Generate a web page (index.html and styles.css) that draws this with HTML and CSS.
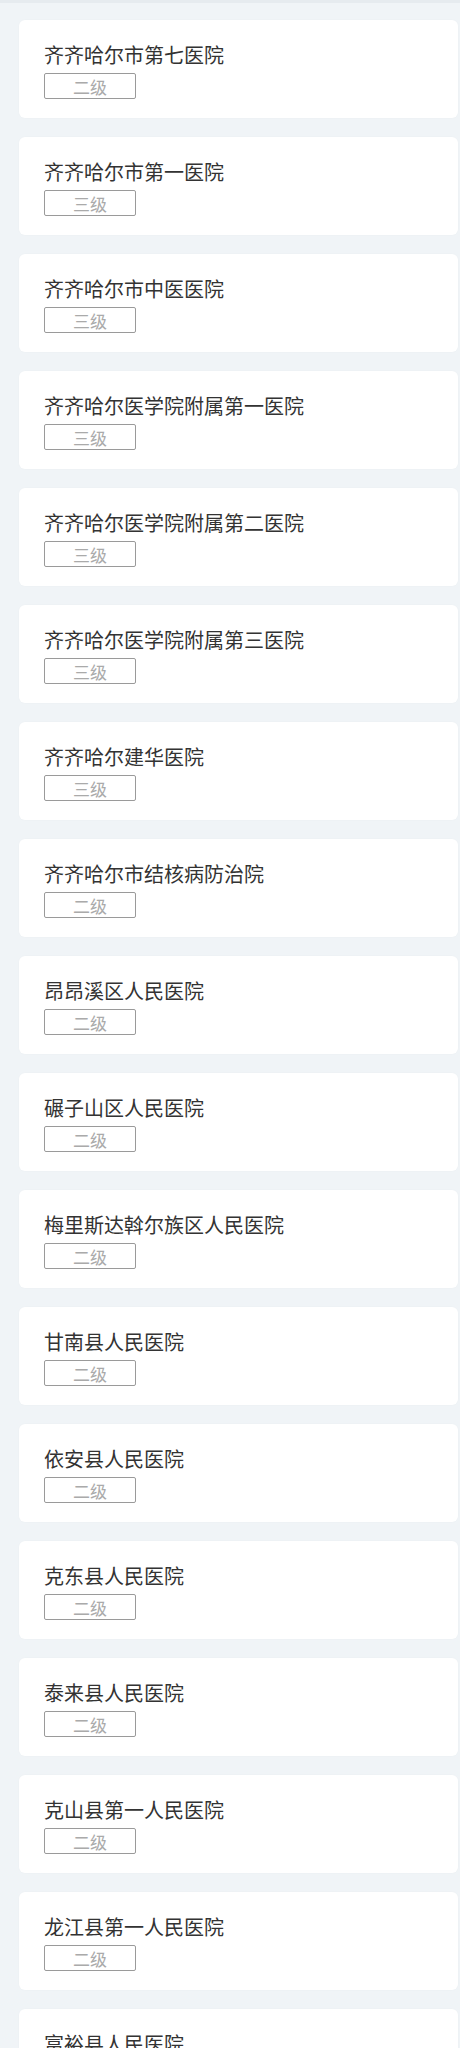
FILE: index.html
```html
<!DOCTYPE html>
<html lang="zh">
<head>
<meta charset="utf-8">
<link rel="stylesheet" href="styles.css">
</head>
<body>
<div class="topbar"></div>
<main class="list">
  <div class="card"><div class="name">齐齐哈尔市第七医院</div><span class="tag">二级</span></div>
  <div class="card"><div class="name">齐齐哈尔市第一医院</div><span class="tag">三级</span></div>
  <div class="card"><div class="name">齐齐哈尔市中医医院</div><span class="tag">三级</span></div>
  <div class="card"><div class="name">齐齐哈尔医学院附属第一医院</div><span class="tag">三级</span></div>
  <div class="card"><div class="name">齐齐哈尔医学院附属第二医院</div><span class="tag">三级</span></div>
  <div class="card"><div class="name">齐齐哈尔医学院附属第三医院</div><span class="tag">三级</span></div>
  <div class="card"><div class="name">齐齐哈尔建华医院</div><span class="tag">三级</span></div>
  <div class="card"><div class="name">齐齐哈尔市结核病防治院</div><span class="tag">二级</span></div>
  <div class="card"><div class="name">昂昂溪区人民医院</div><span class="tag">二级</span></div>
  <div class="card"><div class="name">碾子山区人民医院</div><span class="tag">二级</span></div>
  <div class="card"><div class="name">梅里斯达斡尔族区人民医院</div><span class="tag">二级</span></div>
  <div class="card"><div class="name">甘南县人民医院</div><span class="tag">二级</span></div>
  <div class="card"><div class="name">依安县人民医院</div><span class="tag">二级</span></div>
  <div class="card"><div class="name">克东县人民医院</div><span class="tag">二级</span></div>
  <div class="card"><div class="name">泰来县人民医院</div><span class="tag">二级</span></div>
  <div class="card"><div class="name">克山县第一人民医院</div><span class="tag">二级</span></div>
  <div class="card"><div class="name">龙江县第一人民医院</div><span class="tag">二级</span></div>
  <div class="card"><div class="name">富裕县人民医院</div><span class="tag">二级</span></div>
</main>
</body>
</html>
```
FILE: styles.css
```css
html, body {
  margin: 0;
  padding: 0;
  background: #f0f4f7;
  font-family: "Noto Sans CJK SC", "Noto Sans", sans-serif;
}
.topbar {
  height: 3px;
  background: #e6ebef;
}
.list {
  display: flex;
  flex-direction: column;
  gap: 19px;
  padding: 17px 2px 40px 19px;
}
.card {
  background: #ffffff;
  border-radius: 6px;
  height: 98px;
  box-sizing: border-box;
  padding: 21px 25px 0 25px;
  display: flex;
  flex-direction: column;
  align-items: flex-start;
  gap: 4px;
  box-shadow: 0 0 2px rgba(0, 0, 0, 0.03);
}
.name {
  font-size: 20px;
  line-height: 28px;
  color: #333333;
  white-space: nowrap;
}
.tag {
  display: flex;
  align-items: center;
  justify-content: center;
  width: 92px;
  height: 26px;
  box-sizing: border-box;
  border: 1px solid #9a9a9a;
  border-radius: 2px;
  font-size: 17px;
  color: #aaaaaa;
  line-height: 1;
}
```
